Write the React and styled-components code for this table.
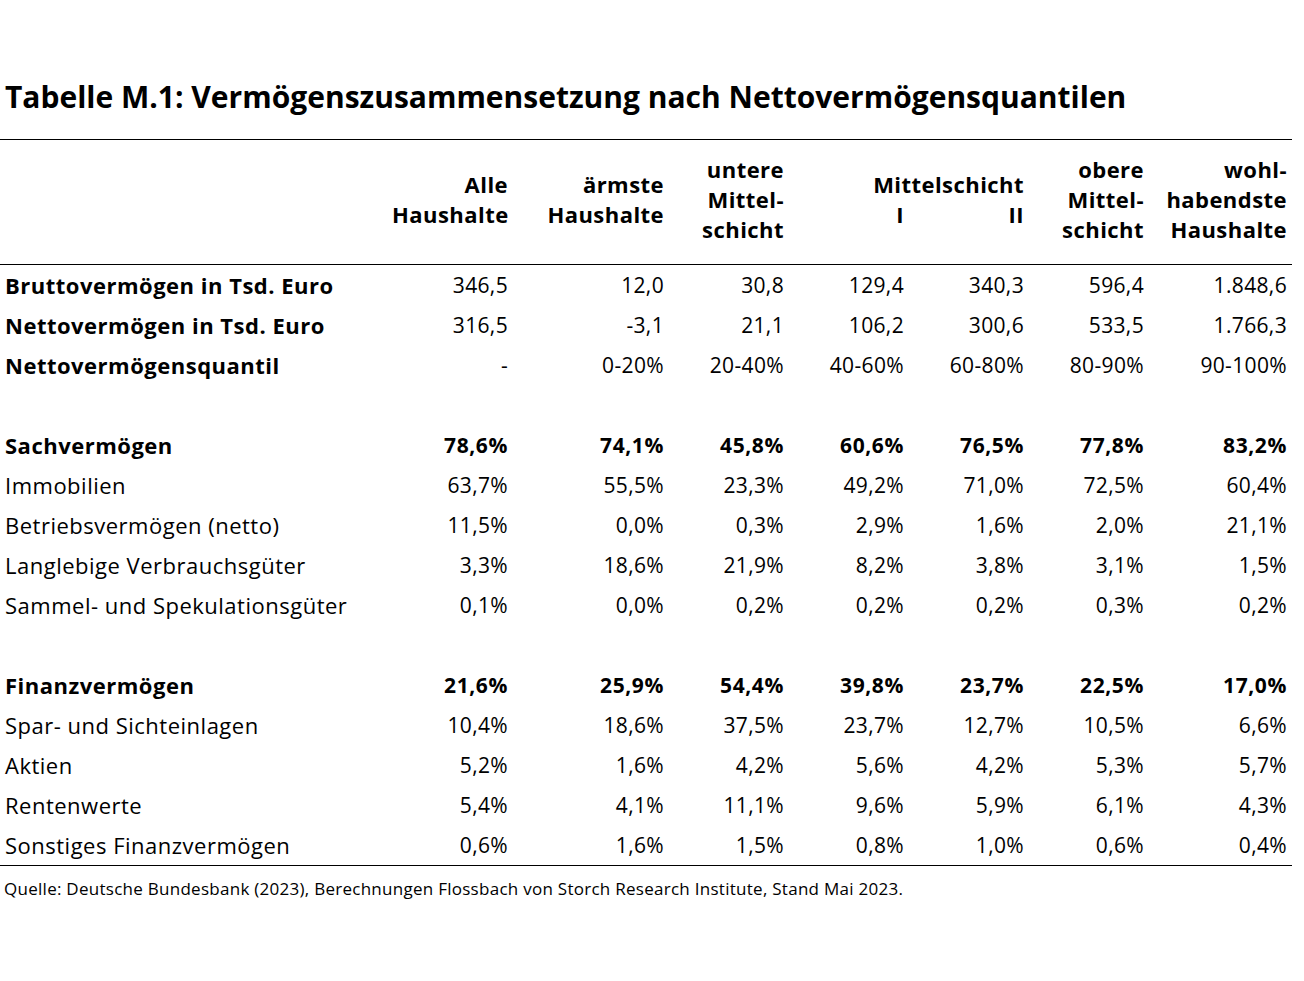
import React from 'react';
import styled, { createGlobalStyle } from 'styled-components';

const GlobalStyle = createGlobalStyle`
  body {
    margin: 0;
    background: #fff;
    color: #000;
    font-family: 'Open Sans', 'Noto Sans', sans-serif;
  }
`;

const Page = styled.div`
  width: 1292px;
  padding-top: 76px;
`;

const Title = styled.h1`
  margin: 0 0 0 5px;
  height: 42px;
  font-size: 30px;
  font-weight: 700;
  letter-spacing: 0;
  line-height: 42px;
`;

const Table = styled.div`
  margin-top: 21px;
  border-top: 1px solid #000;
  border-bottom: 1px solid #000;
`;

const COLS = '392px 121px 156px 120px 120px 120px 120px 143px';

const HeadRow = styled.div`
  display: grid;
  grid-template-columns: ${COLS};
  height: 125px;
  padding-bottom: 6px;
  box-sizing: border-box;
  border-bottom: 1px solid #000;
  align-items: center;
`;

const HeadCell = styled.div`
  grid-column: ${p => p.span || 'auto'};
  text-align: right;
  padding-right: 5px;
  font-size: 22px;
  font-weight: 700;
  line-height: 30px;
  letter-spacing: 0.45px;
  white-space: nowrap;
`;

const SubHead = styled.div`
  display: grid;
  grid-template-columns: 1fr 1fr;
  margin-right: -5px;
`;

const SubCell = styled.div`
  padding-right: 5px;
`;

const Row = styled.div`
  display: grid;
  grid-template-columns: ${COLS};
  height: 40px;
  align-items: center;
`;

const Label = styled.div`
  padding-left: 5px;
  font-size: 22px;
  font-weight: ${p => (p.bold ? 700 : 400)};
  letter-spacing: 0.5px;
  white-space: nowrap;
`;

const Value = styled.div`
  text-align: right;
  padding-right: 5px;
  font-size: 21px;
  font-weight: ${p => (p.bold ? 700 : 400)};
  letter-spacing: ${p => (p.bold ? '0.6px' : '0.35px')};
`;

const Source = styled.p`
  margin: 11px 0 0 4px;
  font-size: 17px;
  line-height: 23px;
  letter-spacing: 0.27px;
`;

const rows = [
  { label: 'Bruttovermögen in Tsd. Euro', bold: 'label', v: ['346,5', '12,0', '30,8', '129,4', '340,3', '596,4', '1.848,6'] },
  { label: 'Nettovermögen in Tsd. Euro', bold: 'label', v: ['316,5', '-3,1', '21,1', '106,2', '300,6', '533,5', '1.766,3'] },
  { label: 'Nettovermögensquantil', bold: 'label', v: ['-', '0-20%', '20-40%', '40-60%', '60-80%', '80-90%', '90-100%'] },
  null,
  { label: 'Sachvermögen', bold: 'all', v: ['78,6%', '74,1%', '45,8%', '60,6%', '76,5%', '77,8%', '83,2%'] },
  { label: 'Immobilien', v: ['63,7%', '55,5%', '23,3%', '49,2%', '71,0%', '72,5%', '60,4%'] },
  { label: 'Betriebsvermögen (netto)', v: ['11,5%', '0,0%', '0,3%', '2,9%', '1,6%', '2,0%', '21,1%'] },
  { label: 'Langlebige Verbrauchsgüter', v: ['3,3%', '18,6%', '21,9%', '8,2%', '3,8%', '3,1%', '1,5%'] },
  { label: 'Sammel- und Spekulationsgüter', v: ['0,1%', '0,0%', '0,2%', '0,2%', '0,2%', '0,3%', '0,2%'] },
  null,
  { label: 'Finanzvermögen', bold: 'all', v: ['21,6%', '25,9%', '54,4%', '39,8%', '23,7%', '22,5%', '17,0%'] },
  { label: 'Spar- und Sichteinlagen', v: ['10,4%', '18,6%', '37,5%', '23,7%', '12,7%', '10,5%', '6,6%'] },
  { label: 'Aktien', v: ['5,2%', '1,6%', '4,2%', '5,6%', '4,2%', '5,3%', '5,7%'] },
  { label: 'Rentenwerte', v: ['5,4%', '4,1%', '11,1%', '9,6%', '5,9%', '6,1%', '4,3%'] },
  { label: 'Sonstiges Finanzvermögen', v: ['0,6%', '1,6%', '1,5%', '0,8%', '1,0%', '0,6%', '0,4%'] },
];

export default function App() {
  return (
    <Page>
      <GlobalStyle />
      <Title>Tabelle M.1: Vermögenszusammensetzung nach Nettovermögensquantilen</Title>
      <Table>
        <HeadRow>
          <div />
          <HeadCell>Alle<br />Haushalte</HeadCell>
          <HeadCell>ärmste<br />Haushalte</HeadCell>
          <HeadCell>untere<br />Mittel-<br />schicht</HeadCell>
          <HeadCell span="span 2">
            Mittelschicht
            <SubHead>
              <SubCell>I</SubCell>
              <SubCell>II</SubCell>
            </SubHead>
          </HeadCell>
          <HeadCell>obere<br />Mittel-<br />schicht</HeadCell>
          <HeadCell>wohl-<br />habendste<br />Haushalte</HeadCell>
        </HeadRow>
        {rows.map((r, i) =>
          r ? (
            <Row key={i}>
              <Label bold={!!r.bold}>{r.label}</Label>
              {r.v.map((v, j) => (
                <Value key={j} bold={r.bold === 'all'}>{v}</Value>
              ))}
            </Row>
          ) : (
            <Row key={i} />
          )
        )}
      </Table>
      <Source>
        Quelle: Deutsche Bundesbank (2023), Berechnungen Flossbach von Storch Research Institute, Stand Mai 2023.
      </Source>
    </Page>
  );
}
